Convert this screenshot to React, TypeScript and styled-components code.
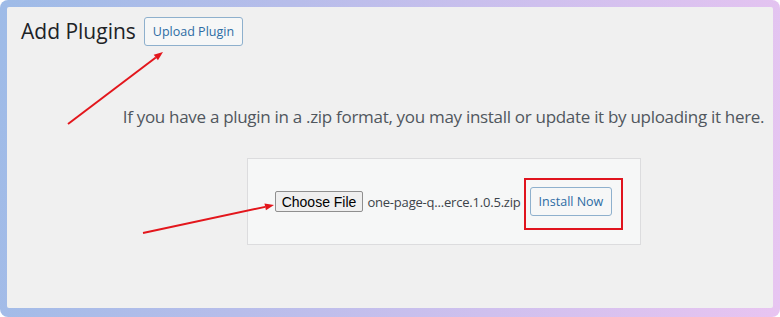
import * as React from 'react';
import styled, { createGlobalStyle } from 'styled-components';

const GlobalStyle = createGlobalStyle`
  html, body {
    margin: 0;
    padding: 0;
    background: #ffffff;
  }
  body {
    width: 780px;
    height: 317px;
    overflow: hidden;
    font-family: "Open Sans", "Noto Sans", sans-serif;
  }
`;

const Frame = styled.div`
  position: relative;
  box-sizing: border-box;
  width: 780px;
  height: 317px;
  padding: 7px 7px 9px 7px;
  border-radius: 8px;
  background: linear-gradient(100deg, #9ebbe7 0%, #b7bdea 35%, #cfc0ee 65%, #e8c4f1 100%);
`;

const Panel = styled.div`
  box-sizing: border-box;
  height: 100%;
  background: #f0f0f0;
  border-radius: 2px;
  padding: 9px 0 0 14px;
`;

const HeaderRow = styled.div`
  display: flex;
  align-items: center;
  gap: 8px;
`;

const Title = styled.h1`
  margin: 0;
  font-size: 21px;
  font-weight: 400;
  color: #1d2327;
  line-height: 30px;
`;

const WpButton = styled.button`
  box-sizing: border-box;
  height: 29px;
  padding: 0 8px;
  font-family: "Open Sans", "Noto Sans", sans-serif;
  font-size: 12.5px;
  color: #2c6ca4;
  background: #f6f7f7;
  border: 1px solid #8eb0cd;
  border-radius: 3px;
  cursor: pointer;
`;

const Content = styled.div`
  margin-left: 101px;
  width: 643px;
  display: flex;
  flex-direction: column;
  align-items: center;
`;

const Help = styled.p`
  margin: 59px 0 0;
  font-size: 17px;
  letter-spacing: -0.3px;
  line-height: 24px;
  color: #50575e;
  white-space: nowrap;
`;

const UploadBox = styled.div`
  box-sizing: border-box;
  width: 394px;
  height: 87px;
  margin-top: 29px;
  background: #f6f7f7;
  border: 1px solid #dcdcde;
  display: flex;
  align-items: center;
  justify-content: center;
  gap: 9px;
`;

const FilePicker = styled.label`
  display: flex;
  align-items: center;
  gap: 4px;
`;

const ChooseButton = styled.span`
  box-sizing: border-box;
  height: 21px;
  padding: 0 6px;
  display: flex;
  align-items: center;
  font-family: "Liberation Sans", Arial, sans-serif;
  font-size: 14px;
  color: #000;
  background: #efefef;
  border: 1px solid #8f8f8f;
  border-radius: 2px;
`;

const FileName = styled.span`
  font-size: 13px;
  letter-spacing: -0.2px;
  color: #3c434a;
`;

const Highlight = styled.div`
  position: relative;
  display: flex;

  &::after {
    content: '';
    position: absolute;
    left: -6px;
    right: -11px;
    top: -9px;
    bottom: -14px;
    border: 2px solid #e0141e;
    pointer-events: none;
  }
`;

const Arrows = styled.svg`
  position: absolute;
  inset: 0;
  pointer-events: none;
`;

function Arrow({ x1, y1, x2, y2 }: { x1: number; y1: number; x2: number; y2: number }) {
  const a = Math.atan2(y2 - y1, x2 - x1);
  const len = 9;
  const w = 3.5;
  const bx = x2 - len * Math.cos(a);
  const by = y2 - len * Math.sin(a);
  const p1 = `${bx + w * Math.sin(a)},${by - w * Math.cos(a)}`;
  const p2 = `${bx - w * Math.sin(a)},${by + w * Math.cos(a)}`;
  return (
    <g>
      <line x1={x1} y1={y1} x2={bx} y2={by} stroke="#e3161c" strokeWidth={2} />
      <polygon points={`${x2},${y2} ${p1} ${p2}`} fill="#e3161c" />
    </g>
  );
}

export default function App() {
  return (
    <>
      <GlobalStyle />
      <Frame>
        <Panel>
          <HeaderRow>
            <Title>Add Plugins</Title>
            <WpButton>Upload Plugin</WpButton>
          </HeaderRow>
          <Content>
            <Help>If you have a plugin in a .zip format, you may install or update it by uploading it here.</Help>
            <UploadBox>
              <FilePicker>
                <ChooseButton>Choose File</ChooseButton>
                <FileName>one-page-q...erce.1.0.5.zip</FileName>
              </FilePicker>
              <Highlight>
                <WpButton>Install Now</WpButton>
              </Highlight>
            </UploadBox>
          </Content>
        </Panel>
        <Arrows width="780" height="317" viewBox="0 0 780 317">
          <Arrow x1={68} y1={124} x2={163} y2={52} />
          <Arrow x1={143} y1={233} x2={274} y2={205} />
        </Arrows>
      </Frame>
    </>
  );
}
